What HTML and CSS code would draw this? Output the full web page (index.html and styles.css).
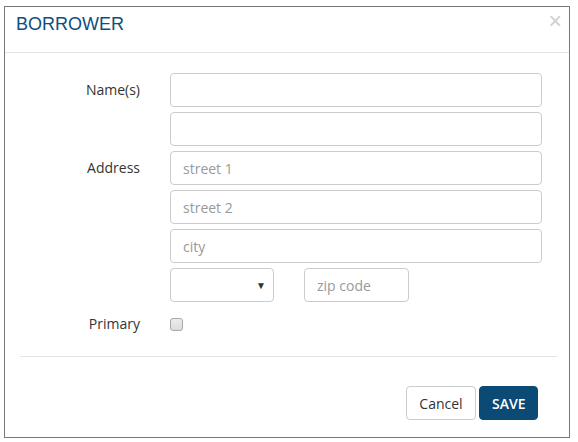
FILE: index.html
```html
<!DOCTYPE html>
<html>
<head>
<meta charset="utf-8">
<link rel="stylesheet" href="styles.css">
</head>
<body>
<div class="dialog">
  <div class="header">
    <h4 class="title">BORROWER</h4>
    <span class="close">&times;</span>
  </div>
  <div class="body">
    <form class="form">
      <label class="label">Name(s)</label>
      <div class="field"><input class="input" type="text"></div>
      <div class="spacer"></div>
      <div class="field"><input class="input" type="text"></div>
      <label class="label">Address</label>
      <div class="field"><input class="input" type="text" placeholder="street 1"></div>
      <div class="spacer"></div>
      <div class="field"><input class="input" type="text" placeholder="street 2"></div>
      <div class="spacer"></div>
      <div class="field"><input class="input" type="text" placeholder="city"></div>
      <div class="spacer"></div>
      <div class="field split">
        <div class="select"><span class="arrow">&#9660;</span></div>
        <input class="input zip" type="text" placeholder="zip code">
      </div>
      <label class="label primary-label">Primary</label>
      <div class="field primary"><input class="check" type="checkbox"></div>
    </form>
  </div>
  <div class="divider"></div>
  <div class="footer">
    <button class="btn btn-default" type="button">Cancel</button>
    <button class="btn btn-primary" type="button">SAVE</button>
  </div>
</div>
</body>
</html>
```
FILE: styles.css
```css
html, body {
  margin: 0;
  padding: 0;
  background: #fff;
}
body {
  padding: 6px 0 0 4px;
  font-family: "Open Sans", "Liberation Sans", sans-serif;
  color: #333;
}
.dialog {
  width: 564px;
  height: 430px;
  border: 1px solid #777;
  background: #fff;
  display: flex;
  flex-direction: column;
}
.header {
  height: 45px;
  border-bottom: 1px solid #e5e5e5;
  display: flex;
  justify-content: space-between;
  align-items: flex-start;
  padding: 0 7px 0 11px;
}
.title {
  margin: 0;
  padding-top: 7px;
  font-family: "Liberation Sans", Arial, sans-serif;
  font-weight: normal;
  font-size: 18px;
  line-height: 20px;
  color: #0d4f80;
}
.close {
  font-family: "Liberation Sans", Arial, sans-serif;
  font-size: 23px;
  line-height: 20px;
  padding-top: 4px;
  color: #cfcfcf;
}
.body {
  padding: 20px 0 0 15px;
}
.form {
  display: grid;
  grid-template-columns: 120px 372px;
  column-gap: 30px;
  row-gap: 5px;
}
.label {
  text-align: right;
  font-size: 14px;
  line-height: 34px;
  color: #333;
}
.field {
  height: 34px;
}
.input {
  box-sizing: border-box;
  width: 100%;
  height: 34px;
  margin: 0;
  border: 1px solid #ccc;
  border-radius: 4px;
  padding: 0 12px;
  font-family: "Open Sans", "Liberation Sans", sans-serif;
  font-size: 14px;
  color: #555;
  background: #fff;
  outline: none;
}
.input::placeholder {
  color: #999;
}
.split {
  display: flex;
  gap: 30px;
}
.select {
  box-sizing: border-box;
  width: 104px;
  height: 34px;
  border: 1px solid #ccc;
  border-radius: 4px;
  display: flex;
  justify-content: flex-end;
  align-items: center;
  padding-right: 7px;
}
.arrow {
  font-size: 10px;
  color: #333;
  line-height: 10px;
}
.input.zip {
  width: 105px;
}
.primary-label {
  margin-top: 7px;
  line-height: 20px;
}
.primary {
  margin-top: 7px;
  height: 20px;
  display: flex;
  align-items: center;
}
.check {
  appearance: none;
  -webkit-appearance: none;
  box-sizing: border-box;
  width: 13px;
  height: 13px;
  margin: 0;
  border: 1px solid #a8a8a8;
  border-radius: 3px;
  background: linear-gradient(#ececec, #dcdcdc);
}
.divider {
  margin: 22px 12px 0 15px;
  height: 1px;
  background: #e5e5e5;
}
.footer {
  display: flex;
  justify-content: flex-end;
  gap: 3px;
  padding: 29px 31px 0 0;
}
.btn {
  box-sizing: border-box;
  height: 34px;
  margin: 0;
  border-radius: 4px;
  font-family: "Open Sans", "Liberation Sans", sans-serif;
  font-size: 14px;
  padding: 0 12px;
  cursor: pointer;
}
.btn-default {
  width: 70px;
  background: #fff;
  border: 1px solid #ccc;
  color: #333;
}
.btn-primary {
  width: 59px;
  background: #0b4a75;
  border: 1px solid #0b4a75;
  color: #fff;
  font-weight: 600;
}
```
